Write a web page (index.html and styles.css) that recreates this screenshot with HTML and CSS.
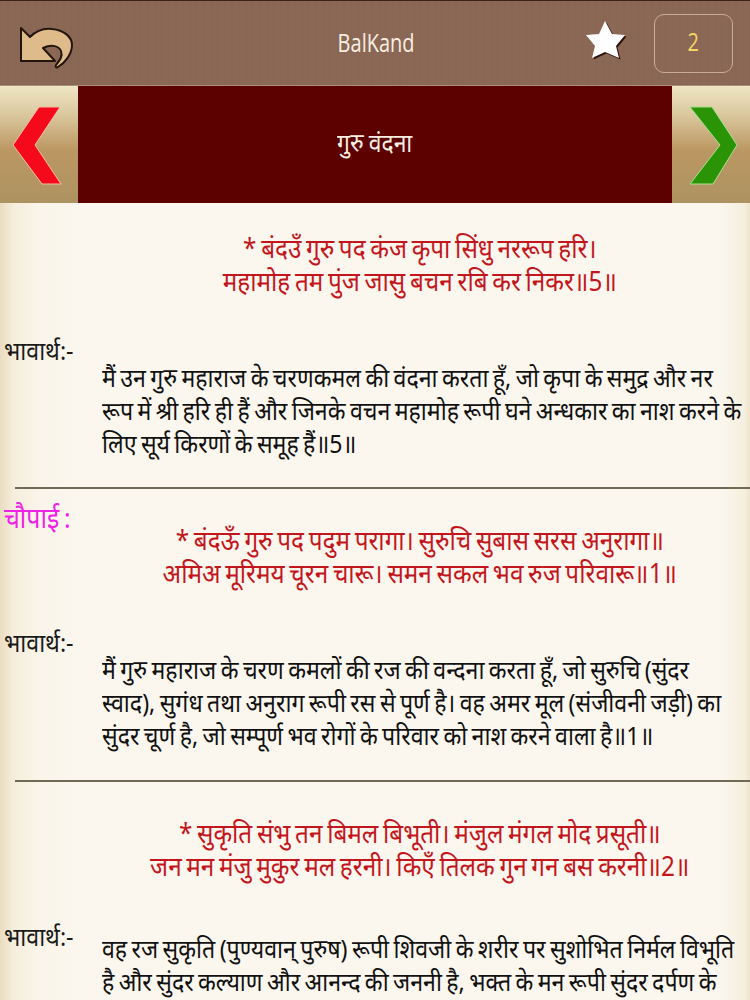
FILE: index.html
```html
<!DOCTYPE html>
<html lang="hi">
<head>
<meta charset="utf-8">
<title>BalKand</title>
<link rel="stylesheet" href="styles.css">
</head>
<body>
<div class="screen">
  <header class="topbar">
    <button class="back" aria-label="back">
      <svg width="56" height="52" viewBox="19 17 56 52"><path d="M21 28 L30 37 C36 31 44 28 52 29 C64 30 72 37 72 45 C72 54 65 63 58 67 C56 68 55 67 56 65 C60 60 63 56 61 51 C59 46 52 44 43 48 L55 61 L21 61 Z" fill="#dfbb8c" stroke="#24150c" stroke-width="2" stroke-linejoin="round"/></svg>
    </button>
    <div class="title">BalKand</div>
    <div class="tools">
      <svg class="star" width="44" height="57" viewBox="584 14 44 57"><path d="M605 20 L612 33 L625 34 L616 45 L619 57 L605 51 L592 57 L595 45 L586 34 L599 33 Z" fill="#2a140a" transform="translate(1.5 1.5)"/><path d="M605 20 L612 33 L625 34 L616 45 L619 57 L605 51 L592 57 L595 45 L586 34 L599 33 Z" fill="#fff"/></svg>
      <div class="count"><span>2</span></div>
    </div>
  </header>
  <nav class="chapter">
    <div class="arrow"><svg width="78" height="117" viewBox="0 0 78 117"><path d="M39 21 L60 21 L35 59 L61 98 L42 98 L13 59 Z" fill="#f50a1c" stroke="#f2c0a4" stroke-width="1"/></svg></div>
    <div class="chapter-title"><span class="squeeze">गुरु वंदना</span></div>
    <div class="arrow"><svg width="78" height="117" viewBox="0 0 78 117"><path d="M18 21 L40 21 L65 59 L41 98 L18 98 L48 59 Z" fill="#2a9406" stroke="#a8e090" stroke-width="1"/></svg></div>
  </nav>
  <main class="content">
    <section class="block first">
      <p class="verse">* बंदउँ गुरु पद कंज कृपा सिंधु नररूप हरि।<br>महामोह तम पुंज जासु बचन रबि कर निकर॥5॥</p>
      <div class="label">भावार्थ:-</div>
      <p class="meaning">मैं उन गुरु महाराज के चरणकमल की वंदना करता हूँ, जो कृपा के समुद्र और नर<br>रूप में श्री हरि ही हैं और जिनके वचन महामोह रूपी घने अन्धकार का नाश करने के<br>लिए सूर्य किरणों के समूह हैं॥5॥</p>
    </section>
    <section class="block">
      <div class="kind">चौपाई :</div>
      <p class="verse">* बंदऊँ गुरु पद पदुम परागा। सुरुचि सुबास सरस अनुरागा॥<br>अमिअ मूरिमय चूरन चारू। समन सकल भव रुज परिवारू॥1॥</p>
      <div class="label">भावार्थ:-</div>
      <p class="meaning">मैं गुरु महाराज के चरण कमलों की रज की वन्दना करता हूँ, जो सुरुचि (सुंदर<br>स्वाद), सुगंध तथा अनुराग रूपी रस से पूर्ण है। वह अमर मूल (संजीवनी जड़ी) का<br>सुंदर चूर्ण है, जो सम्पूर्ण भव रोगों के परिवार को नाश करने वाला है॥1॥</p>
    </section>
    <section class="block last">
      <div class="kind">&nbsp;</div>
      <p class="verse">* सुकृति संभु तन बिमल बिभूती। मंजुल मंगल मोद प्रसूती॥<br>जन मन मंजु मुकुर मल हरनी। किएँ तिलक गुन गन बस करनी॥2॥</p>
      <div class="label">भावार्थ:-</div>
      <p class="meaning">वह रज सुकृति (पुण्यवान् पुरुष) रूपी शिवजी के शरीर पर सुशोभित निर्मल विभूति<br>है और सुंदर कल्याण और आनन्द की जननी है, भक्त के मन रूपी सुंदर दर्पण के<br>मैल को दूर करने वाली और तिलक करने से गुणों के समूह को वश में करने वाली है॥2॥</p>
    </section>
  </main>
</div>
</body>
</html>
```
FILE: styles.css
```css
* { box-sizing: border-box; }
html, body { margin: 0; padding: 0; }
body { width: 750px; height: 1000px; overflow: hidden; font-family: "Noto Sans", sans-serif; }
.screen { width: 750px; height: 1000px; overflow: hidden; display: flex; flex-direction: column; background: linear-gradient(90deg, #eadcc0 0, #f6eedd 14px, #faf5ea 40px, #fbf7ef 90px, #fbf7ef 720px, #f6eedd 745px, #efe4cd 100%); }
.topbar { height: 86px; flex: none; display: grid; grid-template-columns: 1fr auto 1fr; align-items: center; background: repeating-linear-gradient(90deg, rgba(60,30,10,.02) 0 2px, transparent 2px 7px), #8b6755; border-top: 1px solid #3a2418; border-bottom: 1px solid #ab8d7b; padding-left: 19px; padding-right: 17px; }
.back { width: 56px; height: 52px; padding: 0; border: 0; background: none; display: block; }
.back svg, .star { display: block; }
.title { color: #f8efe2; font-size: 25px; font-family: "Open Sans", sans-serif; transform: scaleX(.8); padding-bottom: 3px; }
.tools { display: flex; align-items: center; justify-content: flex-end; gap: 26px; }
.count { width: 79px; height: 59px; border: 1px solid #c9ac97; border-radius: 10px; color: #f6d662; font-size: 25px; font-family: "Open Sans", sans-serif; display: flex; align-items: center; justify-content: center; padding-bottom: 5px; }
.count span { transform: scaleX(.8); }
.chapter { height: 117px; flex: none; display: flex; }
.arrow { width: 78px; flex: none; background: linear-gradient(180deg, #efe6c4 0, #dac79d 25%, #bb9762 55%, #ad9362 100%); }
.arrow svg { display: block; }
.chapter-title { flex: 1; background: #5c0000; color: #f8efe2; font-size: 26px; display: flex; align-items: center; justify-content: center; padding-bottom: 5px; }
.squeeze { transform: scaleX(.88); word-spacing: -1px; }
.content { flex: 1; padding-left: 4px; }
.block { height: 293px; padding-top: 12px; border-bottom: 2px solid #6f6a55; margin-left: 11px; }
.block.first { height: 286px; padding-top: 28px; }
.verse, .meaning, .label, .kind { font-size: 26px; line-height: 33px; word-spacing: -1.8px; transform: scaleX(.89); transform-origin: left top; }
.verse { margin: -11px 0 0 75px; color: #c3161c; text-align: center; width: 733px; font-size: 27px; transform: scaleX(.9); }
.first .verse { margin-top: 0; }
.kind { color: #ee22e6; margin: 0 0 0 -11px; width: 200px; font-size: 28px; }
.label { color: #1a1a1a; margin: 37px 0 0 -11px; width: 200px; }
.last .label { margin-top: 38px; }
.meaning { margin: -6px 0 0 87px; color: #111; width: 728px; white-space: nowrap; }
.last .meaning { margin-top: -21px; }
```
